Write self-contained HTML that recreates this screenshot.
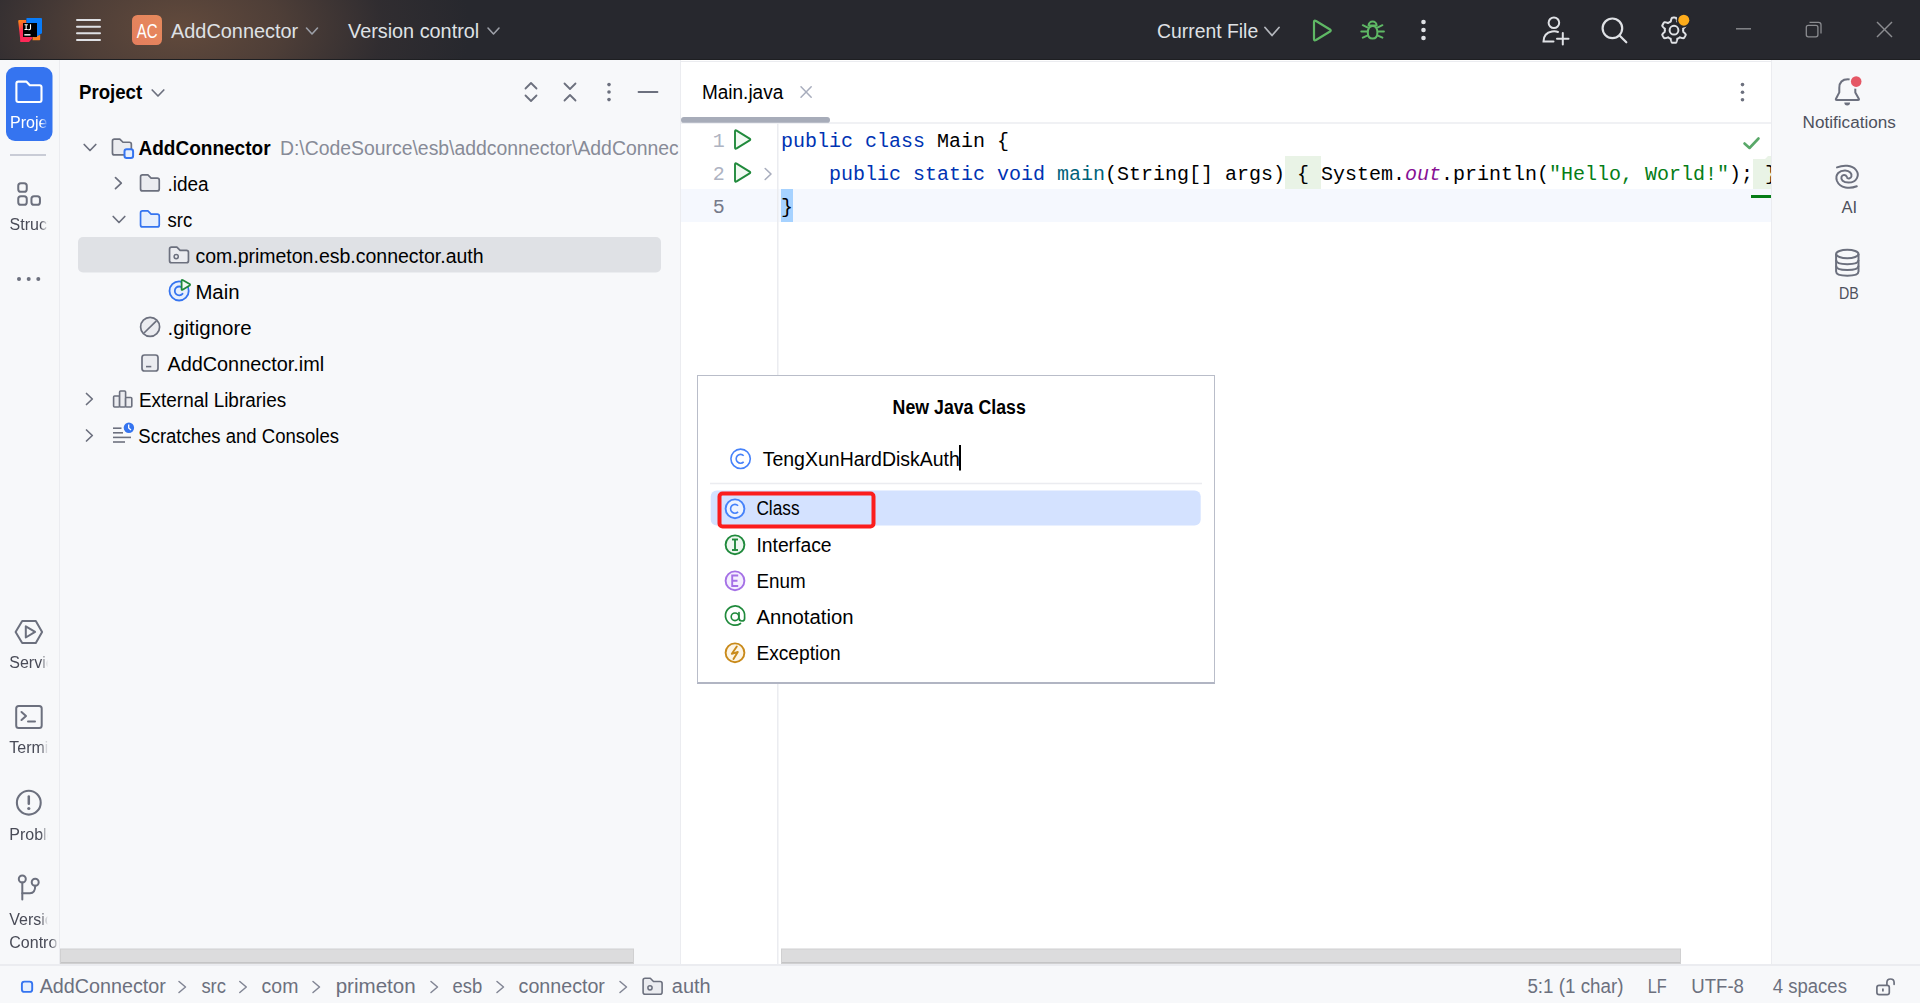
<!DOCTYPE html>
<html><head><meta charset="utf-8"><title>AddConnector - Main.java</title>
<style>
*{box-sizing:border-box;margin:0;padding:0}
html,body{width:1920px;height:1003px;overflow:hidden;background:#f7f8fa;font-family:"Liberation Sans",sans-serif;}
.a{position:absolute}
svg.o{position:absolute;left:0;top:0;width:1920px;height:1003px;font-family:"Liberation Sans",sans-serif}
#title{left:0;top:0;width:1920px;height:60px;background:#27282e;}
#grad{left:0;top:0;width:760px;height:60px;background:radial-gradient(ellipse 290px 160px at 180px 28px, rgba(98,74,60,1) 0%, rgba(88,68,58,0.8) 35%, rgba(62,52,52,0.4) 70%, rgba(39,40,46,0) 100%);}
#lstrip{left:0;top:60px;width:60px;height:904px;background:#f7f8fa;border-right:1px solid #ebecf0}
#proj{left:60px;top:60px;width:621px;height:904px;background:#f7f8fa;border-right:1px solid #ebecf0}
#editor{left:681px;top:60px;width:1090px;height:904px;background:#fff}
#rstrip{left:1771px;top:60px;width:149px;height:904px;background:#f7f8fa;border-left:1px solid #ebecf0}
#status{left:0;top:964px;width:1920px;height:39px;background:#f7f8fa;border-top:2px solid #ebecf0}
#dialog{left:697px;top:375px;width:518px;height:309px;background:#fff;border:1px solid #b9bdc9;border-bottom:2px solid #b1b5c3}
</style></head><body>
<div id="title" class="a"></div>
<div id="grad" class="a"></div>
<div id="lstrip" class="a"></div>
<div id="proj" class="a"></div>
<div id="editor" class="a"></div>
<div id="rstrip" class="a"></div>
<div id="status" class="a"></div>

<svg class="o" viewBox="0 0 1920 1003">
<g>
<defs><linearGradient id="ijl" x1="0" y1="0" x2="0.3" y2="1"><stop offset="0.1" stop-color="#fc801d"/><stop offset="0.55" stop-color="#fe2857"/></linearGradient></defs>
<path d="M18.2 21 Q18.2 20.1 19.2 20.1 L26 20 L30.5 36 L25 42 L20.5 42 Z" fill="url(#ijl)"/>
<path d="M20.5 34 L33 37.5 L29 42 L20.5 42 Z" fill="#fe2857"/>
<path d="M33 36 L40.2 35 L40.2 39.5 Q40.2 40.2 39.5 40.2 L32.5 40.2 Z" fill="#fc801d"/>
<path d="M26.5 18 L41 18 Q42 18 42 19 L42 33.3 L35 37.5 L26 31 Z" fill="#087cfa"/>
<rect x="23" y="23" width="14" height="14" fill="#000"/>
<rect x="24.3" y="34" width="6.2" height="1.6" fill="#e0e0e0"/>
<path d="M24.5 24.8 L27.8 24.8 M26.15 24.8 L26.15 29.5 M24.5 29.5 L27.8 29.5 M30.5 24.2 L30.5 28.6 Q30.5 29.6 29.5 29.6 L28.3 29.6" fill="none" stroke="#fff" stroke-width="1.1"/>
</g>
<line x1="77" y1="20" x2="100" y2="20" stroke="#dfe1e5" stroke-width="2" stroke-linecap="round"/>
<line x1="77" y1="26.7" x2="100" y2="26.7" stroke="#dfe1e5" stroke-width="2" stroke-linecap="round"/>
<line x1="77" y1="33.3" x2="100" y2="33.3" stroke="#dfe1e5" stroke-width="2" stroke-linecap="round"/>
<line x1="77" y1="40" x2="100" y2="40" stroke="#dfe1e5" stroke-width="2" stroke-linecap="round"/>
<defs><linearGradient id="acg" x1="0" y1="1" x2="1" y2="0"><stop offset="0" stop-color="#e57e5e"/><stop offset="1" stop-color="#e68a5c"/></linearGradient></defs>
<rect x="132" y="15" width="30" height="30" rx="5.5" fill="url(#acg)"/>
<text x="136.8" y="38.2" font-size="20.4" fill="#fff" textLength="20.8" lengthAdjust="spacingAndGlyphs">AC</text>
<text x="171" y="38" font-size="19.6" fill="#dfe1e5" textLength="127.2" lengthAdjust="spacingAndGlyphs">AddConnector</text>
<polyline points="306.5,28 312,34 317.5,28" fill="none" stroke="#9da0a8" stroke-width="1.6" stroke-linecap="round" stroke-linejoin="round"/>
<text x="348" y="38" font-size="19.6" fill="#dfe1e5" textLength="131.2" lengthAdjust="spacingAndGlyphs">Version control</text>
<polyline points="488.0,28 493.5,34 499.0,28" fill="none" stroke="#9da0a8" stroke-width="1.6" stroke-linecap="round" stroke-linejoin="round"/>
<text x="1157" y="38" font-size="19.6" fill="#dfe1e5" textLength="101.2" lengthAdjust="spacingAndGlyphs">Current File</text>
<polyline points="1265,27.5 1272,35.5 1279,27.5" fill="none" stroke="#b4b7bd" stroke-width="1.8" stroke-linecap="round" stroke-linejoin="round"/>
<path d="M1314 22 L1314 39 Q1314 41 1316 40 L1330 31.5 Q1331.5 30.5 1330 29.5 L1316 21 Q1314 20 1314 22 Z" fill="none" stroke="#5fb865" stroke-width="2.2" stroke-linejoin="round"/>
<g fill="none" stroke="#5fb865" stroke-width="2" stroke-linecap="round">
<path d="M1372.6 25.9 C1376 25.9 1377.4 29 1377.4 32.5 C1377.4 36.5 1375.5 38.6 1372.6 38.6 C1369.7 38.6 1367.8 36.5 1367.8 32.5 C1367.8 29 1369.2 25.9 1372.6 25.9 Z"/>
<path d="M1368.6 25.6 A4 4 0 0 1 1376.6 25.6 Z"/>
<line x1="1361.3" y1="31.5" x2="1366.8" y2="31.5"/><line x1="1378.4" y1="31.5" x2="1383.9" y2="31.5"/>
<line x1="1362.8" y1="25.2" x2="1367.3" y2="27.3"/><line x1="1382.4" y1="25.2" x2="1377.9" y2="27.3"/>
<line x1="1362.8" y1="37.7" x2="1367.3" y2="35.6"/><line x1="1382.4" y1="37.7" x2="1377.9" y2="35.6"/>
</g>
<circle cx="1423.5" cy="22" r="2.3" fill="#dfe1e5"/>
<circle cx="1423.5" cy="30" r="2.3" fill="#dfe1e5"/>
<circle cx="1423.5" cy="38" r="2.3" fill="#dfe1e5"/>
<g fill="none" stroke="#dfe1e5" stroke-width="2" stroke-linecap="round">
<circle cx="1553.9" cy="22.7" r="5.3"/>
<path d="M1553.5 41.5 L1543.5 41.5 Q1543.5 33 1552 31.5 Q1555.5 31 1558 32"/>
<line x1="1562.8" y1="33" x2="1562.8" y2="44.5"/><line x1="1557" y1="38.7" x2="1568.5" y2="38.7"/>
</g>
<g fill="none" stroke="#dfe1e5" stroke-width="2.2" stroke-linecap="round">
<circle cx="1612.4" cy="28.3" r="9.8"/><line x1="1619.5" y1="35.5" x2="1626.3" y2="42.3"/>
</g>
<path d="M1674.00 17.60 L1674.33 17.60 L1674.66 17.62 L1674.99 17.64 L1675.32 17.67 L1675.64 17.71 L1675.97 17.76 L1676.24 18.12 L1676.46 18.61 L1676.66 19.14 L1676.82 19.67 L1676.96 20.21 L1677.08 20.73 L1677.17 21.23 L1677.30 21.61 L1677.52 21.70 L1677.74 21.80 L1677.96 21.90 L1678.18 22.00 L1678.39 22.11 L1678.60 22.23 L1678.81 22.36 L1679.01 22.48 L1679.21 22.62 L1679.41 22.76 L1679.60 22.90 L1679.79 23.05 L1680.18 22.97 L1680.66 22.80 L1681.17 22.64 L1681.71 22.49 L1682.25 22.37 L1682.80 22.27 L1683.34 22.22 L1683.79 22.27 L1684.00 22.53 L1684.19 22.79 L1684.38 23.06 L1684.57 23.34 L1684.74 23.62 L1684.91 23.90 L1685.07 24.19 L1685.23 24.48 L1685.37 24.78 L1685.51 25.08 L1685.64 25.38 L1685.76 25.68 L1685.58 26.10 L1685.27 26.54 L1684.91 26.97 L1684.53 27.38 L1684.13 27.77 L1683.74 28.13 L1683.35 28.47 L1683.09 28.76 L1683.12 29.00 L1683.15 29.24 L1683.17 29.48 L1683.19 29.72 L1683.20 29.96 L1683.20 30.20 L1683.20 30.44 L1683.19 30.68 L1683.17 30.92 L1683.15 31.16 L1683.12 31.40 L1683.09 31.64 L1683.35 31.93 L1683.74 32.27 L1684.13 32.63 L1684.53 33.02 L1684.91 33.43 L1685.27 33.86 L1685.58 34.30 L1685.76 34.72 L1685.64 35.02 L1685.51 35.32 L1685.37 35.62 L1685.23 35.92 L1685.07 36.21 L1684.91 36.50 L1684.74 36.78 L1684.57 37.06 L1684.38 37.34 L1684.19 37.61 L1684.00 37.87 L1683.79 38.13 L1683.34 38.18 L1682.80 38.13 L1682.25 38.03 L1681.71 37.91 L1681.17 37.76 L1680.66 37.60 L1680.18 37.43 L1679.79 37.35 L1679.60 37.50 L1679.41 37.64 L1679.21 37.78 L1679.01 37.92 L1678.81 38.04 L1678.60 38.17 L1678.39 38.29 L1678.18 38.40 L1677.96 38.50 L1677.74 38.60 L1677.52 38.70 L1677.30 38.79 L1677.17 39.17 L1677.08 39.67 L1676.96 40.19 L1676.82 40.73 L1676.66 41.26 L1676.46 41.79 L1676.24 42.28 L1675.97 42.64 L1675.64 42.69 L1675.32 42.73 L1674.99 42.76 L1674.66 42.78 L1674.33 42.80 L1674.00 42.80 L1673.67 42.80 L1673.34 42.78 L1673.01 42.76 L1672.68 42.73 L1672.36 42.69 L1672.03 42.64 L1671.76 42.28 L1671.54 41.79 L1671.34 41.26 L1671.18 40.73 L1671.04 40.19 L1670.92 39.67 L1670.83 39.17 L1670.70 38.79 L1670.48 38.70 L1670.26 38.60 L1670.04 38.50 L1669.82 38.40 L1669.61 38.29 L1669.40 38.17 L1669.19 38.04 L1668.99 37.92 L1668.79 37.78 L1668.59 37.64 L1668.40 37.50 L1668.21 37.35 L1667.82 37.43 L1667.34 37.60 L1666.83 37.76 L1666.29 37.91 L1665.75 38.03 L1665.20 38.13 L1664.66 38.18 L1664.21 38.13 L1664.00 37.87 L1663.81 37.61 L1663.62 37.34 L1663.43 37.06 L1663.26 36.78 L1663.09 36.50 L1662.93 36.21 L1662.77 35.92 L1662.63 35.62 L1662.49 35.32 L1662.36 35.02 L1662.24 34.72 L1662.42 34.30 L1662.73 33.86 L1663.09 33.43 L1663.47 33.02 L1663.87 32.63 L1664.26 32.27 L1664.65 31.93 L1664.91 31.64 L1664.88 31.40 L1664.85 31.16 L1664.83 30.92 L1664.81 30.68 L1664.80 30.44 L1664.80 30.20 L1664.80 29.96 L1664.81 29.72 L1664.83 29.48 L1664.85 29.24 L1664.88 29.00 L1664.91 28.76 L1664.65 28.47 L1664.26 28.13 L1663.87 27.77 L1663.47 27.38 L1663.09 26.97 L1662.73 26.54 L1662.42 26.10 L1662.24 25.68 L1662.36 25.38 L1662.49 25.08 L1662.63 24.78 L1662.77 24.48 L1662.93 24.19 L1663.09 23.90 L1663.26 23.62 L1663.43 23.34 L1663.62 23.06 L1663.81 22.79 L1664.00 22.53 L1664.21 22.27 L1664.66 22.22 L1665.20 22.27 L1665.75 22.37 L1666.29 22.49 L1666.83 22.64 L1667.34 22.80 L1667.82 22.97 L1668.21 23.05 L1668.40 22.90 L1668.59 22.76 L1668.79 22.62 L1668.99 22.48 L1669.19 22.36 L1669.40 22.23 L1669.61 22.11 L1669.82 22.00 L1670.04 21.90 L1670.26 21.80 L1670.48 21.70 L1670.70 21.61 L1670.83 21.23 L1670.92 20.73 L1671.04 20.21 L1671.18 19.67 L1671.34 19.14 L1671.54 18.61 L1671.76 18.12 L1672.03 17.76 L1672.36 17.71 L1672.68 17.67 L1673.01 17.64 L1673.34 17.62 L1673.67 17.60 L1674.00 17.60 Z" fill="none" stroke="#dfe1e5" stroke-width="2" stroke-linejoin="round"/>
<circle cx="1674" cy="30.2" r="4.4" fill="none" stroke="#dfe1e5" stroke-width="2"/>
<circle cx="1683.8" cy="20.2" r="7.2" fill="#27282e"/>
<circle cx="1683.8" cy="20.2" r="5.5" fill="#fdac1b"/>
<line x1="1736" y1="28.8" x2="1751" y2="28.8" stroke="#8b8c90" stroke-width="1.4"/>
<rect x="1806.3" y="25.3" width="11.6" height="11.5" rx="2" fill="none" stroke="#8b8c90" stroke-width="1.3"/>
<path d="M1809.5 22.3 L1818.5 22.3 Q1821 22.3 1821 24.8 L1821 33.5" fill="none" stroke="#8b8c90" stroke-width="1.3"/>
<g stroke="#8b8c90" stroke-width="1.4"><line x1="1877" y1="22" x2="1892" y2="37"/><line x1="1892" y1="22" x2="1877" y2="37"/></g>
</svg>
<svg class="o" viewBox="0 0 1920 1003">
<defs><linearGradient id="fadeg" gradientUnits="userSpaceOnUse" x1="40.5" y1="0" x2="48" y2="0"><stop offset="0" stop-color="#fff"/><stop offset="1" stop-color="#000"/></linearGradient><mask id="lsmask" maskUnits="userSpaceOnUse" x="0" y="60" width="60" height="900"><rect x="0" y="60" width="60" height="900" fill="url(#fadeg)"/></mask><linearGradient id="fadeg2" gradientUnits="userSpaceOnUse" x1="51" y1="0" x2="58.5" y2="0"><stop offset="0" stop-color="#fff"/><stop offset="1" stop-color="#000"/></linearGradient><mask id="lsmask2" maskUnits="userSpaceOnUse" x="0" y="60" width="60" height="900"><rect x="0" y="60" width="60" height="900" fill="url(#fadeg2)"/></mask></defs>
<rect x="6" y="67" width="46.5" height="74" rx="9" fill="#3574f0"/>
<path d="M16.4 83.5 Q16.4 81.6 18.3 81.6 L26.3 81.6 L29.8 85.2 L39.6 85.2 Q41.5 85.2 41.5 87.1 L41.5 100.1 Q41.5 102 39.6 102 L18.3 102 Q16.4 102 16.4 100.1 Z" fill="none" stroke="#fff" stroke-width="2.1" stroke-linejoin="round"/>
<g mask="url(#lsmask)">
<text x="10" y="127.6" font-size="16" fill="#fff">Projects</text>
</g>
<line x1="10" y1="155" x2="46" y2="155" stroke="#c9ccd6" stroke-width="2"/>
<g fill="none" stroke="#6c707e" stroke-width="2"><rect x="18.25" y="183.25" width="8.5" height="8.5" rx="2.6"/><rect x="18.25" y="196.25" width="8.5" height="8.5" rx="2.6"/><rect x="31.45" y="196.25" width="8.5" height="8.5" rx="2.6"/></g>
<g mask="url(#lsmask)">
<text x="9.6" y="230" font-size="16" fill="#494b57">Structure</text>
</g>
<circle cx="19" cy="279" r="2" fill="#6c707e"/>
<circle cx="28.7" cy="279" r="2" fill="#6c707e"/>
<circle cx="38.3" cy="279" r="2" fill="#6c707e"/>
<path d="M22.2 620.9 L35.8 620.9 L42.1 631.9 L35.8 643 L22.2 643 L15.6 631.9 Z" fill="none" stroke="#6c707e" stroke-width="2" stroke-linejoin="round"/>
<path d="M25.8 626.3 L25.8 637.5 L35.1 631.9 Z" fill="none" stroke="#6c707e" stroke-width="2" stroke-linejoin="round"/>
<g mask="url(#lsmask)">
<text x="9.3" y="668.2" font-size="16" fill="#494b57">Services</text>
</g>
<rect x="16.2" y="706" width="25.5" height="22" rx="2.5" fill="none" stroke="#6c707e" stroke-width="2"/>
<polyline points="21.5,712 26,716 21.5,720" fill="none" stroke="#6c707e" stroke-width="2" stroke-linecap="round" stroke-linejoin="round"/>
<line x1="28" y1="721.5" x2="35" y2="721.5" stroke="#6c707e" stroke-width="2" stroke-linecap="round"/>
<g mask="url(#lsmask)">
<text x="9.3" y="752.5" font-size="16" fill="#494b57">Terminal</text>
</g>
<circle cx="28.8" cy="802.7" r="11.9" fill="none" stroke="#6c707e" stroke-width="2.1"/>
<line x1="28.8" y1="796.5" x2="28.8" y2="803.8" stroke="#6c707e" stroke-width="2.5" stroke-linecap="round"/><circle cx="28.8" cy="808.5" r="1.6" fill="#6c707e"/>
<g mask="url(#lsmask)">
<text x="9.3" y="839.8" font-size="16" fill="#494b57">Problems</text>
</g>
<g fill="none" stroke="#6c707e" stroke-width="2" stroke-linecap="round"><circle cx="22.3" cy="879" r="3.5"/><circle cx="35.2" cy="882.3" r="3.5"/><line x1="22.3" y1="882.5" x2="22.3" y2="899.5"/><path d="M22.3 893.3 L30 893.3 Q35.2 893.3 35.2 885.8"/></g>
<g mask="url(#lsmask)">
<text x="9.3" y="924.8" font-size="16" fill="#494b57">Version</text>
</g>
<g mask="url(#lsmask2)">
<text x="9.3" y="948.2" font-size="16" fill="#494b57">Control</text>
</g>
</svg>
<svg class="o" viewBox="0 0 1920 1003">
<defs><clipPath id="pclip"><rect x="60" y="60" width="618.5" height="904"/></clipPath></defs>
<text x="79" y="98.7" font-size="19.6" fill="#000" font-weight="700" textLength="63.2" lengthAdjust="spacingAndGlyphs">Project</text>
<polyline points="152.2,90 158,96 163.8,90" fill="none" stroke="#6c707e" stroke-width="1.7" stroke-linecap="round" stroke-linejoin="round"/>
<g fill="none" stroke="#6c707e" stroke-width="1.8" stroke-linecap="round" stroke-linejoin="round">
<polyline points="525.5,88.5 531,83 536.5,88.5"/><polyline points="525.5,95.5 531,101 536.5,95.5"/>
<polyline points="564.5,83.5 570,89 575.5,83.5"/><polyline points="564.5,100.5 570,95 575.5,100.5"/>
<line x1="638.5" y1="92" x2="657.5" y2="92"/>
</g>
<circle cx="609" cy="84.6" r="1.8" fill="#6c707e"/>
<circle cx="609" cy="92" r="1.8" fill="#6c707e"/>
<circle cx="609" cy="99.6" r="1.8" fill="#6c707e"/>
<rect x="78" y="237" width="583" height="35.5" rx="5" fill="#dfe1e5"/>
<g clip-path="url(#pclip)">
<polyline points="84.2,144.5 90,150.5 95.8,144.5" fill="none" stroke="#6c707e" stroke-width="1.7" stroke-linecap="round" stroke-linejoin="round"/>
<path d="M112.44999999999999 141.04999999999998 Q112.44999999999999 139.04999999999998 114.44999999999999 139.04999999999998 L119.8 139.04999999999998 L123.0 142.24999999999997 L129.35 142.24999999999997 Q131.35 142.24999999999997 131.35 144.24999999999997 L131.35 152.95 Q131.35 154.95 129.35 154.95 L114.44999999999999 154.95 Q112.44999999999999 154.95 112.44999999999999 152.95 Z" fill="#ebecf0" stroke="#6c707e" stroke-width="1.7" stroke-linejoin="round"/>
<rect x="124.5" y="149.3" width="8.6" height="8.6" rx="2.2" fill="#e7effd" stroke="#3574f0" stroke-width="2"/>
<text x="138.4" y="155" font-size="19.6" fill="#000" font-weight="700" textLength="132.2" lengthAdjust="spacingAndGlyphs">AddConnector</text>
<text x="279.9" y="155" font-size="19.4" fill="#878b97">D:\CodeSource\esb\addconnector\AddConnector</text>
<polyline points="115.5,177.7 121.3,183.2 115.5,188.7" fill="none" stroke="#6c707e" stroke-width="1.7" stroke-linecap="round" stroke-linejoin="round"/>
<path d="M140.54999999999998 176.95 Q140.54999999999998 174.95 142.54999999999998 174.95 L147.89999999999998 174.95 L151.09999999999997 178.14999999999998 L157.25 178.14999999999998 Q159.25 178.14999999999998 159.25 180.14999999999998 L159.25 188.95 Q159.25 190.95 157.25 190.95 L142.54999999999998 190.95 Q140.54999999999998 190.95 140.54999999999998 188.95 Z" fill="#ebecf0" stroke="#6c707e" stroke-width="1.7" stroke-linejoin="round"/>
<text x="167.5" y="190.6" font-size="19.6" fill="#000" textLength="41.2" lengthAdjust="spacingAndGlyphs">.idea</text>
<polyline points="113.2,216.5 119,222.5 124.8,216.5" fill="none" stroke="#6c707e" stroke-width="1.7" stroke-linecap="round" stroke-linejoin="round"/>
<path d="M140.54999999999998 212.95 Q140.54999999999998 210.95 142.54999999999998 210.95 L147.89999999999998 210.95 L151.09999999999997 214.14999999999998 L157.25 214.14999999999998 Q159.25 214.14999999999998 159.25 216.14999999999998 L159.25 224.95 Q159.25 226.95 157.25 226.95 L142.54999999999998 226.95 Q140.54999999999998 226.95 140.54999999999998 224.95 Z" fill="#e7effd" stroke="#3574f0" stroke-width="1.7" stroke-linejoin="round"/>
<text x="167.5" y="226.5" font-size="19.6" fill="#000" textLength="24.7" lengthAdjust="spacingAndGlyphs">src</text>
<path d="M169.54999999999998 249.15 Q169.54999999999998 247.15 171.54999999999998 247.15 L176.89999999999998 247.15 L180.09999999999997 250.35 L186.45 250.35 Q188.45 250.35 188.45 252.35 L188.45 260.75 Q188.45 262.75 186.45 262.75 L171.54999999999998 262.75 Q169.54999999999998 262.75 169.54999999999998 260.75 Z" fill="#ebecf0" stroke="#6c707e" stroke-width="1.7" stroke-linejoin="round"/>
<circle cx="176.2" cy="256.6" r="2.1" fill="none" stroke="#6c707e" stroke-width="1.5"/>
<text x="195.4" y="262.6" font-size="19.6" fill="#000" textLength="288.2" lengthAdjust="spacingAndGlyphs">com.primeton.esb.connector.auth</text>
<circle cx="179.1" cy="290.9" r="9.6" fill="#e7effd" stroke="#3574f0" stroke-width="1.8"/>
<path d="M182.5 288 A4.4 4.4 0 1 0 182.5 293.8" fill="none" stroke="#3574f0" stroke-width="1.8" stroke-linecap="round"/>
<path d="M181.6 280.6 Q181.6 279.5 182.6 280 L189.6 284 Q190.6 284.9 189.6 285.6 L182.6 289.8 Q181.6 290.3 181.6 289.2 Z" fill="#f2faf3" stroke="#208a3c" stroke-width="1.8" stroke-linejoin="round"/>
<text x="195.4" y="298.7" font-size="19.6" fill="#000" textLength="44.2" lengthAdjust="spacingAndGlyphs">Main</text>
<circle cx="150.1" cy="326.9" r="9.5" fill="#ebecf0" stroke="#6c707e" stroke-width="1.7"/>
<line x1="144" y1="333" x2="156.4" y2="320.8" stroke="#6c707e" stroke-width="1.7"/>
<text x="167.5" y="334.7" font-size="19.6" fill="#000" textLength="84.2" lengthAdjust="spacingAndGlyphs">.gitignore</text>
<rect x="142" y="355" width="16" height="16" rx="2.5" fill="#ebecf0" stroke="#6c707e" stroke-width="1.7"/>
<line x1="146" y1="366.6" x2="151.3" y2="366.6" stroke="#6c707e" stroke-width="1.6"/>
<text x="167.4" y="371" font-size="19.6" fill="#000" textLength="156.7" lengthAdjust="spacingAndGlyphs">AddConnector.iml</text>
<polyline points="86.5,393.5 92.3,399 86.5,404.5" fill="none" stroke="#6c707e" stroke-width="1.7" stroke-linecap="round" stroke-linejoin="round"/>
<g fill="#ebecf0" stroke="#6c707e" stroke-width="1.6" stroke-linejoin="round"><rect x="113.6" y="396" width="6" height="11" rx="1"/><rect x="119.6" y="391" width="6" height="16" rx="1"/><rect x="125.6" y="397.5" width="6.2" height="9.5" rx="1"/></g>
<text x="139" y="407" font-size="19.6" fill="#000" textLength="147.2" lengthAdjust="spacingAndGlyphs">External Libraries</text>
<polyline points="86.5,430.0 92.3,435.5 86.5,441.0" fill="none" stroke="#6c707e" stroke-width="1.7" stroke-linecap="round" stroke-linejoin="round"/>
<g stroke="#6c707e" stroke-width="1.6"><line x1="113" y1="428.2" x2="121.5" y2="428.2"/><line x1="113" y1="432.8" x2="123" y2="432.8"/><line x1="113" y1="437.4" x2="131" y2="437.4"/><line x1="113" y1="442" x2="125" y2="442"/></g>
<circle cx="128.9" cy="427.8" r="5.2" fill="#3574f0"/><polyline points="128.7,424.5 128.7,428 131,430" fill="none" stroke="#fff" stroke-width="1.3"/>
<text x="138.3" y="443" font-size="19.6" fill="#000" textLength="200.7" lengthAdjust="spacingAndGlyphs">Scratches and Consoles</text>
</g>
<rect x="60.5" y="949" width="573" height="14.5" fill="#dcdcdd" stroke="#d0d0d1" stroke-width="1"/>
<line x1="61" y1="962.5" x2="633" y2="962.5" stroke="#c4c4c5" stroke-width="1.2"/>
</svg>
<svg class="o" viewBox="0 0 1920 1003">
<rect x="0" y="59" width="1920" height="1" fill="#1e1f22"/>
<rect x="680" y="61" width="1092" height="1" fill="#ebecf0"/>
<text x="702" y="98.75" font-size="19.6" fill="#000" textLength="81.2" lengthAdjust="spacingAndGlyphs">Main.java</text>
<g stroke="#a8adbd" stroke-width="1.5" stroke-linecap="round"><line x1="801" y1="86.8" x2="811.2" y2="97.3"/><line x1="811.2" y1="86.8" x2="801" y2="97.3"/></g>
<circle cx="1742.5" cy="84.6" r="1.8" fill="#6c707e"/>
<circle cx="1742.5" cy="92.2" r="1.8" fill="#6c707e"/>
<circle cx="1742.5" cy="99.7" r="1.8" fill="#6c707e"/>
<line x1="681" y1="123" x2="1771" y2="123" stroke="#ebecf0" stroke-width="1.5"/>
<rect x="681" y="117" width="149" height="5.8" rx="2.9" fill="#a7acb9"/>
<rect x="681" y="189" width="1090" height="33" fill="#f5f8fe"/>
<line x1="777.8" y1="123.5" x2="777.8" y2="964" stroke="#ebecf0" stroke-width="1.5"/>
<text x="712.7" y="147" font-family="Liberation Mono, monospace" font-size="20" fill="#aeb3c2">1</text>
<text x="712.7" y="180" font-family="Liberation Mono, monospace" font-size="20" fill="#aeb3c2">2</text>
<text x="712.7" y="213" font-family="Liberation Mono, monospace" font-size="20" fill="#767a8a">5</text>
<path d="M735 131.5 L735 147.5 Q735 149.3 736.6 148.4 L749.6 140.4 Q751 139.5 749.6 138.6 L736.6 130.6 Q735 129.7 735 131.5 Z" fill="#f2faf3" stroke="#208a3c" stroke-width="1.9" stroke-linejoin="round"/>
<path d="M735 164.5 L735 180.5 Q735 182.3 736.6 181.4 L749.6 173.4 Q751 172.5 749.6 171.6 L736.6 163.6 Q735 162.7 735 164.5 Z" fill="#f2faf3" stroke="#208a3c" stroke-width="1.9" stroke-linejoin="round"/>
<polyline points="765.2,168.5 771,174 765.2,179.5" fill="none" stroke="#a8adbd" stroke-width="1.6" stroke-linecap="round" stroke-linejoin="round"/>
<rect x="781" y="189" width="12" height="33" fill="#a6d2ff"/>
<rect x="1285" y="156" width="36" height="33" fill="#e9f3e6"/>
<path d="M1753 159 L1765 159 L1768 156 L1771 156 L1771 189 L1753 189 Z" fill="#e9f3e6"/>
<rect x="1751" y="195" width="20" height="3" fill="#067d17"/>
<text x="781" y="147" font-family="Liberation Mono, monospace" font-size="20" fill="#0033b3">public</text>
<text x="865" y="147" font-family="Liberation Mono, monospace" font-size="20" fill="#0033b3">class</text>
<text x="937" y="147" font-family="Liberation Mono, monospace" font-size="20" fill="#000">Main {</text>
<text x="829" y="180" font-family="Liberation Mono, monospace" font-size="20" fill="#0033b3">public</text>
<text x="913" y="180" font-family="Liberation Mono, monospace" font-size="20" fill="#0033b3">static</text>
<text x="997" y="180" font-family="Liberation Mono, monospace" font-size="20" fill="#0033b3">void</text>
<text x="1057" y="180" font-family="Liberation Mono, monospace" font-size="20" fill="#00627a">main</text>
<text x="1105" y="180" font-family="Liberation Mono, monospace" font-size="20" fill="#000">(String[] args)</text>
<text x="1297" y="180" font-family="Liberation Mono, monospace" font-size="20" fill="#000">{</text>
<text x="1321" y="180" font-family="Liberation Mono, monospace" font-size="20" fill="#000">System.</text>
<text x="1405" y="180" font-family="Liberation Mono, monospace" font-size="20" fill="#871094" font-style="italic">out</text>
<text x="1441" y="180" font-family="Liberation Mono, monospace" font-size="20" fill="#000">.println(</text>
<text x="1549" y="180" font-family="Liberation Mono, monospace" font-size="20" fill="#067d17">&quot;Hello, World!&quot;</text>
<text x="1729" y="180" font-family="Liberation Mono, monospace" font-size="20" fill="#000">);</text>
<defs><clipPath id="edclip"><rect x="681" y="123" width="1090" height="841"/></clipPath></defs>
<g clip-path="url(#edclip)"><text x="1765" y="180" font-family="Liberation Mono, monospace" font-size="20" fill="#000">}</text></g>
<text x="781" y="213" font-family="Liberation Mono, monospace" font-size="20" fill="#000">}</text>
<polyline points="1744.5,143.5 1749.5,148 1758.5,138.5" fill="none" stroke="#59a869" stroke-width="2.6" stroke-linecap="round" stroke-linejoin="round"/>
<rect x="781.5" y="949" width="899" height="14.5" fill="#dcdcdd" stroke="#d0d0d1" stroke-width="1"/>
<line x1="782" y1="962.5" x2="1680" y2="962.5" stroke="#c4c4c5" stroke-width="1.2"/>
</svg>
<svg class="o" viewBox="0 0 1920 1003">
<path d="M1850 79.6 Q1849 79.3 1848 79.3 Q1839.3 79.3 1839.3 88 L1839.3 92.4 L1836 98.7 Q1835.4 100 1836.8 100 L1858 100 Q1859.4 100 1858.8 98.7 L1855.3 92.4 L1855.3 88.5" fill="none" stroke="#6c707e" stroke-width="2" stroke-linejoin="round"/>
<path d="M1844.3 102.6 L1850.1 102.6 A2.9 2.9 0 0 1 1844.3 102.6 Z" fill="#6c707e"/>
<circle cx="1856.2" cy="81.6" r="7" fill="#f7f8fa"/><circle cx="1856.2" cy="81.6" r="5.3" fill="#e55765"/>
<text x="1802.6" y="128" font-size="15.6" fill="#4e515d" textLength="93.2" lengthAdjust="spacingAndGlyphs">Notifications</text>
<g fill="none" stroke="#6c707e" stroke-width="2" stroke-linecap="round"><path d="M1837 167.4 C1843 165 1852 164.8 1856 170 C1860 175 1857 182.5 1848.5 182.6 C1843 182.6 1840.6 179.5 1841.5 176.8 C1842.3 174.5 1845.5 174.2 1846.8 176.8"/><path d="M1856.8 186.3 C1850 189 1840 188.5 1837 181 C1834.5 174 1840 170.3 1845.3 170.5 C1849.5 170.7 1852.3 173.5 1851.4 176.5 C1850.8 178.5 1848.5 178.8 1847.3 178"/></g>
<text x="1841.5" y="213" font-size="15.6" fill="#4e515d" textLength="15.7" lengthAdjust="spacingAndGlyphs">AI</text>
<g fill="none" stroke="#6c707e" stroke-width="2"><ellipse cx="1847.3" cy="254" rx="11.2" ry="4.2"/><path d="M1836.1 254 L1836.1 271.5 Q1836.1 275.7 1847.3 275.7 Q1858.5 275.7 1858.5 271.5 L1858.5 254"/><path d="M1836.1 260 Q1836.1 264.2 1847.3 264.2 Q1858.5 264.2 1858.5 260"/><path d="M1836.1 265.8 Q1836.1 270 1847.3 270 Q1858.5 270 1858.5 265.8"/></g>
<text x="1838.9" y="298.5" font-size="15.6" fill="#4e515d" textLength="19.8" lengthAdjust="spacingAndGlyphs">DB</text>
</svg>
<div id="dialog" class="a"></div>
<svg class="o" viewBox="0 0 1920 1003">
<text x="892.6" y="414" font-size="19.6" fill="#000" font-weight="700" textLength="133.2" lengthAdjust="spacingAndGlyphs">New Java Class</text>
<circle cx="740.6" cy="458.8" r="9.7" fill="none" stroke="#4682fa" stroke-width="1.6"/>
<path d="M743.7 455.7 A4.4 4.4 0 1 0 743.7 461.9" fill="none" stroke="#4682fa" stroke-width="1.6"/>
<text x="762.7" y="465.7" font-size="19.6" fill="#000" textLength="197.2" lengthAdjust="spacingAndGlyphs">TengXunHardDiskAuth</text>
<rect x="959" y="445" width="2" height="25.5" fill="#000"/>
<line x1="710" y1="483.5" x2="1202" y2="483.5" stroke="#ebecf0" stroke-width="1.5"/>
<rect x="710.7" y="490.6" width="490" height="35" rx="6" fill="#d4e2ff"/>
<circle cx="735" cy="508.8" r="9.4" fill="#edf3fe" stroke="#4682fa" stroke-width="1.9"/>
<path d="M738.1 505.7 A4.4 4.4 0 1 0 738.1 511.9" fill="none" stroke="#4682fa" stroke-width="1.6"/>
<text x="756.4" y="515.2" font-size="19.6" fill="#000" textLength="43.2" lengthAdjust="spacingAndGlyphs">Class</text>
<circle cx="735" cy="544.8" r="9.4" fill="#eef7f0" stroke="#208a3c" stroke-width="1.9"/>
<g stroke="#208a3c" stroke-width="1.9"><line x1="735" y1="539.5" x2="735" y2="550"/><line x1="732" y1="539.5" x2="738" y2="539.5"/><line x1="732" y1="550" x2="738" y2="550"/></g>
<text x="756.4" y="551.9" font-size="19.6" fill="#000" textLength="75.2" lengthAdjust="spacingAndGlyphs">Interface</text>
<circle cx="735" cy="580.8" r="9.4" fill="#f5efff" stroke="#a571e6" stroke-width="1.9"/>
<path d="M738.2 575.5 L732.2 575.5 L732.2 586 L738.2 586 M732.2 580.8 L737.5 580.8" fill="none" stroke="#a571e6" stroke-width="1.9"/>
<text x="756.4" y="588" font-size="19.6" fill="#000" textLength="49.2" lengthAdjust="spacingAndGlyphs">Enum</text>
<path d="M741 586 Q737 590.6 732 589.5 Q725.4 588 725.4 617 " fill="none" stroke="none"/>
<path d="M740.5 623.5 A9.6 9.6 0 1 1 744.6 616.8 L744.6 618.5 Q744.6 621 742 621 Q739 621 739 618 L739 612.5" fill="none" stroke="#208a3c" stroke-width="1.7" stroke-linecap="round"/>
<circle cx="735" cy="616.8" r="3.8" fill="none" stroke="#208a3c" stroke-width="1.6"/>
<text x="756.4" y="624.3" font-size="19.6" fill="#000" textLength="97.2" lengthAdjust="spacingAndGlyphs">Annotation</text>
<circle cx="735" cy="652.8" r="9.4" fill="#fdf5e6" stroke="#c98a1a" stroke-width="1.9"/>
<path d="M736.8 646.5 L731.8 653.8 L737.8 652 L733.5 659" fill="none" stroke="#c98a1a" stroke-width="1.9" stroke-linejoin="round" stroke-linecap="round"/>
<text x="756.4" y="659.7" font-size="19.6" fill="#000" textLength="84.2" lengthAdjust="spacingAndGlyphs">Exception</text>
<rect x="719.5" y="493.5" width="154" height="33" rx="3" fill="none" stroke="#fb1d1d" stroke-width="4"/>
</svg>
<svg class="o" viewBox="0 0 1920 1003">
<rect x="21.9" y="981.6" width="10.3" height="10.3" rx="2.5" fill="#e7effd" stroke="#3574f0" stroke-width="1.9"/>
<text x="39.7" y="993.1" font-size="19.6" fill="#6c707e" textLength="126.2" lengthAdjust="spacingAndGlyphs">AddConnector</text>
<polyline points="179,981.5 185.5,987 179,992.5" fill="none" stroke="#818594" stroke-width="1.5" stroke-linecap="round" stroke-linejoin="round"/>
<polyline points="239.8,981.5 246.3,987 239.8,992.5" fill="none" stroke="#818594" stroke-width="1.5" stroke-linecap="round" stroke-linejoin="round"/>
<polyline points="313,981.5 319.5,987 313,992.5" fill="none" stroke="#818594" stroke-width="1.5" stroke-linecap="round" stroke-linejoin="round"/>
<polyline points="431,981.5 437.5,987 431,992.5" fill="none" stroke="#818594" stroke-width="1.5" stroke-linecap="round" stroke-linejoin="round"/>
<polyline points="497,981.5 503.5,987 497,992.5" fill="none" stroke="#818594" stroke-width="1.5" stroke-linecap="round" stroke-linejoin="round"/>
<polyline points="620,981.5 626.5,987 620,992.5" fill="none" stroke="#818594" stroke-width="1.5" stroke-linecap="round" stroke-linejoin="round"/>
<text x="201.4" y="993.1" font-size="19.6" fill="#6c707e" textLength="24.6" lengthAdjust="spacingAndGlyphs">src</text>
<text x="261.6" y="993.1" font-size="19.6" fill="#6c707e" textLength="36.8" lengthAdjust="spacingAndGlyphs">com</text>
<text x="335.7" y="993.1" font-size="19.6" fill="#6c707e" textLength="80.0" lengthAdjust="spacingAndGlyphs">primeton</text>
<text x="452.5" y="993.1" font-size="19.6" fill="#6c707e" textLength="29.7" lengthAdjust="spacingAndGlyphs">esb</text>
<text x="518.6" y="993.1" font-size="19.6" fill="#6c707e" textLength="86.3" lengthAdjust="spacingAndGlyphs">connector</text>
<text x="671.8" y="993.1" font-size="19.6" fill="#6c707e" textLength="38.8" lengthAdjust="spacingAndGlyphs">auth</text>
<path d="M643.0999999999999 980.3 Q643.0999999999999 978.3 645.0999999999999 978.3 L650.3 978.3 L653.5 981.5 L660.1 981.5 Q662.1 981.5 662.1 983.5 L662.1 992.2 Q662.1 994.2 660.1 994.2 L645.0999999999999 994.2 Q643.0999999999999 994.2 643.0999999999999 992.2 Z" fill="#ebecf0" stroke="#6c707e" stroke-width="1.6" stroke-linejoin="round"/>
<circle cx="650" cy="987.8" r="2.1" fill="none" stroke="#6c707e" stroke-width="1.5"/>
<text x="1527.4" y="993.1" font-size="19.6" fill="#6c707e" textLength="96.2" lengthAdjust="spacingAndGlyphs">5:1 (1 char)</text>
<text x="1647.7" y="993.1" font-size="19.6" fill="#6c707e" textLength="19.0" lengthAdjust="spacingAndGlyphs">LF</text>
<text x="1691.3" y="993.1" font-size="19.6" fill="#6c707e" textLength="52.6" lengthAdjust="spacingAndGlyphs">UTF-8</text>
<text x="1772.8" y="993.1" font-size="19.6" fill="#6c707e" textLength="74.1" lengthAdjust="spacingAndGlyphs">4 spaces</text>
<rect x="1876.9" y="985.3" width="12.4" height="9.4" rx="2.2" fill="none" stroke="#6c707e" stroke-width="1.7"/>
<path d="M1886.9 985 L1886.9 982.4 Q1886.9 979 1890.5 979 Q1894.1 979 1894.1 982.4 L1894.1 984.3" fill="none" stroke="#6c707e" stroke-width="1.7" stroke-linecap="round"/>
<line x1="1882.9" y1="988.5" x2="1882.9" y2="991.5" stroke="#6c707e" stroke-width="1.8"/>
</svg>
</body></html>
